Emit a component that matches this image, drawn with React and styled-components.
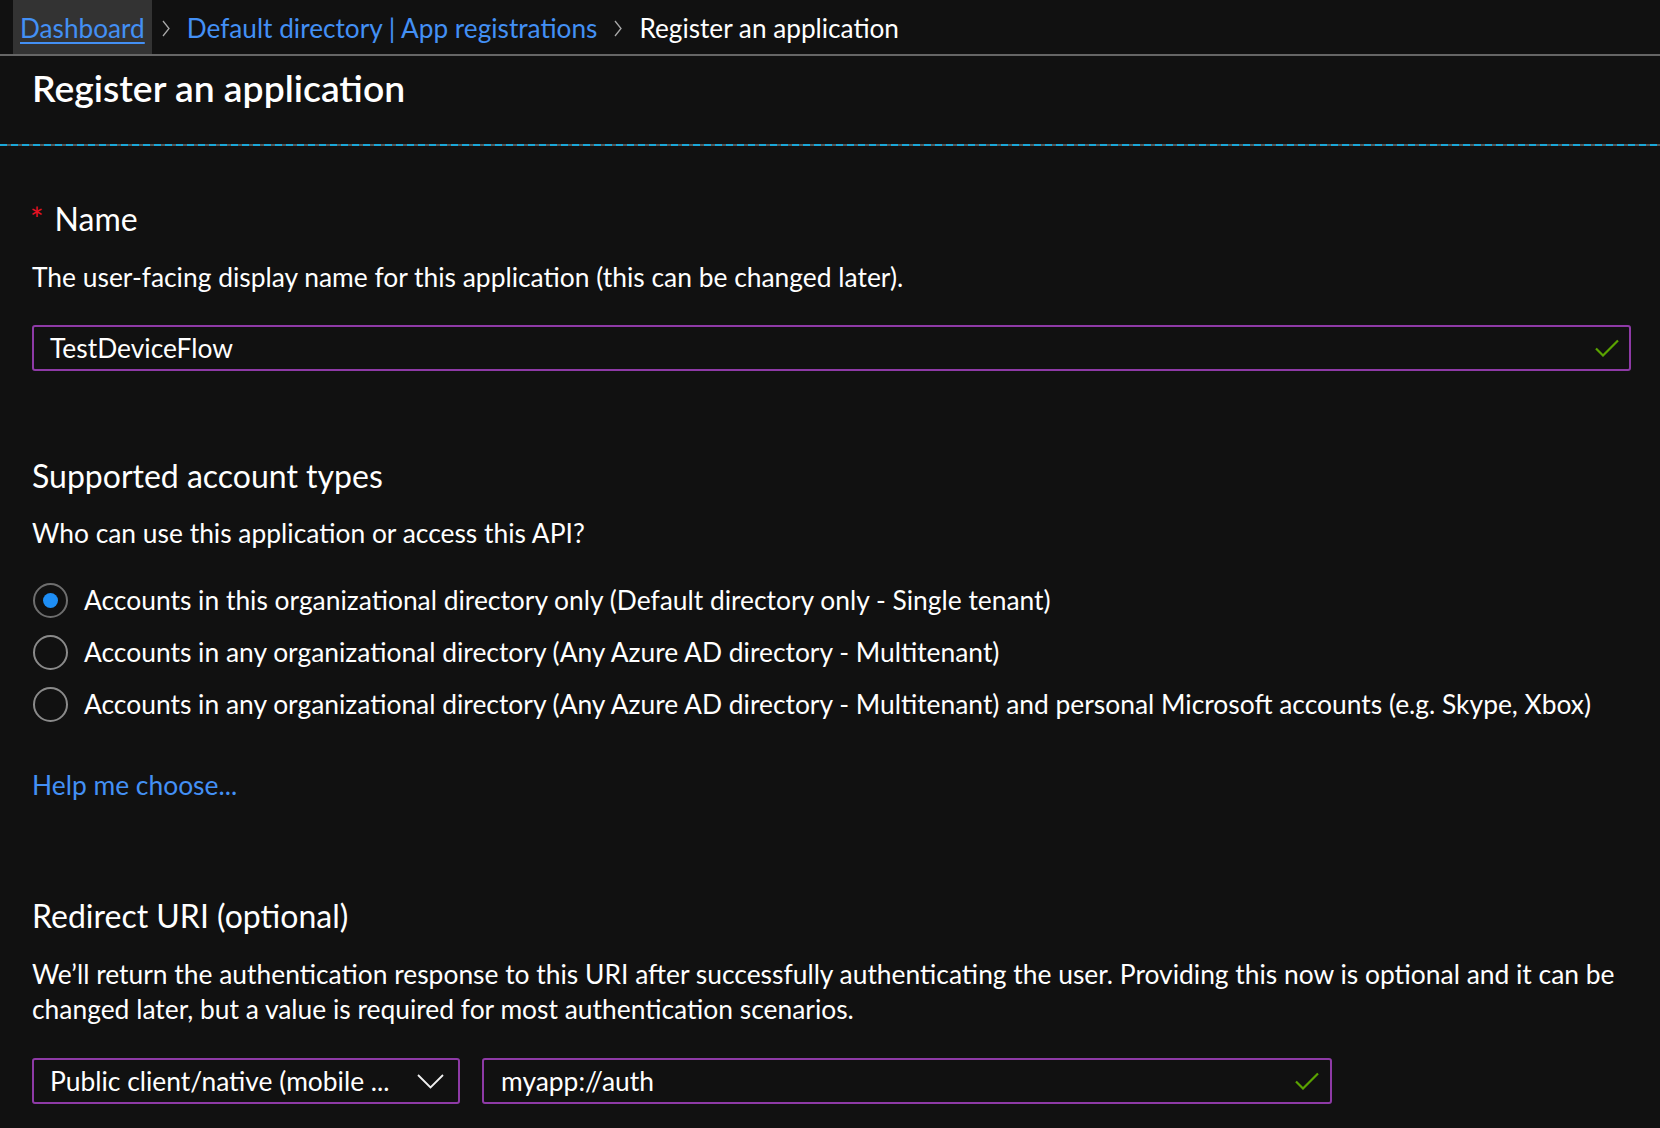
import React from "react";
import styled, { createGlobalStyle } from "styled-components";

const Global = createGlobalStyle`
  html, body { margin: 0; padding: 0; background: #111111; }
  body {
    font-family: "Segoe UI", Lato, "Open Sans", sans-serif;
    color: #ffffff;
  }
  * { box-sizing: border-box; }
`;

const Page = styled.div`
  width: 1660px;
  min-height: 1128px;
  background: #111111;
`;

const Breadcrumb = styled.nav`
  height: 56px;
  border-bottom: 2px solid #666666;
  display: flex;
  align-items: stretch;
  padding-left: 13px;
  font-size: 26.2px;
  line-height: 32px;
`;

const Crumb = styled.a`
  display: flex;
  align-items: center;
  padding: 2px 7px 0;
  color: ${(p) => (p.$current ? "#ffffff" : "#4390f5")};
  text-decoration: ${(p) => (p.$underline ? "underline" : "none")};
  text-underline-offset: 4px;
  text-decoration-thickness: 2px;
  background: ${(p) => (p.$hover ? "#333333" : "transparent")};
`;

const Sep = styled.span`
  display: flex;
  align-items: center;
  padding: 2px 10px 0;
`;

const TitleBar = styled.header`
  padding: 10px 32px 34px;
`;

const Title = styled.h1`
  margin: 0;
  font-size: 37.3px;
  line-height: 44px;
  font-weight: 600;
`;

const Dashed = styled.div`
  height: 2px;
  background: repeating-linear-gradient(
    to right,
    #1aa7d9 0 7px,
    #555555 7px 11px
  );
`;

const Content = styled.main`
  width: 1631px;
  padding-left: 32px;
`;

const Heading = styled.h2`
  margin: ${(p) => p.$mt}px 0 0;
  font-size: 32px;
  line-height: 40px;
  font-weight: 400;
`;

const Required = styled.span`
  color: #e81123;
  margin-right: 11px;
  margin-left: -2px;
`;

const Text = styled.p`
  margin: ${(p) => p.$mt}px 0 0;
  font-size: 26.4px;
  line-height: ${(p) => p.$lh || 32}px;
`;

const Field = styled.div`
  margin-top: ${(p) => p.$mt || 0}px;
  width: ${(p) => p.$w};
  height: 46px;
  border: 2px solid #8e3aa6;
  border-radius: 3px;
  display: flex;
  align-items: center;
  justify-content: space-between;
  padding: 0 ${(p) => p.$pr || 10}px 0 ${(p) => p.$pl || 16}px;
  font-size: 26.4px;
  color: #ffffff;
  flex: none;
`;

const RadioList = styled.div`
  margin-top: 31px;
  display: flex;
  flex-direction: column;
  gap: 12px;
`;

const RadioRow = styled.label`
  height: 40px;
  display: flex;
  align-items: center;
  font-size: 26.4px;
  gap: 16px;
  padding-left: 1px;
`;

const RadioCircle = styled.span`
  width: 35px;
  height: 35px;
  border-radius: 50%;
  border: 2px solid ${(p) => (p.$on ? "#6e6e6e" : "#8a8a8a")};
  display: flex;
  align-items: center;
  justify-content: center;
  flex: none;
  &::after {
    content: "";
    width: 15px;
    height: 15px;
    border-radius: 50%;
    background: ${(p) => (p.$on ? "#1e8ef5" : "transparent")};
  }
`;

const Link = styled.a`
  display: block;
  margin-top: 45px;
  font-size: 26.4px;
  line-height: 32px;
  color: #4390f5;
  text-decoration: none;
`;

const Row = styled.div`
  margin-top: 31px;
  display: flex;
  gap: 22px;
`;

const Check = ({ w = 24 }) => (
  <svg width={w} height="18" viewBox="0 0 24 18" fill="none">
    <path d="M1 9.5 L8 16.5 L23 1.5" stroke="#5aa300" strokeWidth="2.2" />
  </svg>
);

const Chevron = () => (
  <svg width="8" height="17" viewBox="0 0 8 17" fill="none">
    <path d="M1 1 L7 8.5 L1 16" stroke="#a8a8a8" strokeWidth="1.3" />
  </svg>
);

const Caret = () => (
  <svg width="27" height="15" viewBox="0 0 27 15" fill="none">
    <path d="M1 1 L13.5 13.5 L26 1" stroke="#f0f0f0" strokeWidth="1.8" />
  </svg>
);

const options = [
  "Accounts in this organizational directory only (Default directory only - Single tenant)",
  "Accounts in any organizational directory (Any Azure AD directory - Multitenant)",
  "Accounts in any organizational directory (Any Azure AD directory - Multitenant) and personal Microsoft accounts (e.g. Skype, Xbox)",
];

export default function App() {
  return (
    <Page>
      <Global />
      <Breadcrumb>
        <Crumb $hover $underline href="#">Dashboard</Crumb>
        <Sep><Chevron /></Sep>
        <Crumb href="#">Default directory | App registrations</Crumb>
        <Sep><Chevron /></Sep>
        <Crumb $current>Register an application</Crumb>
      </Breadcrumb>
      <TitleBar>
        <Title>Register an application</Title>
      </TitleBar>
      <Dashed />
      <Content>
        <Heading $mt={53}>
          <Required>*</Required>Name
        </Heading>
        <Text $mt={22}>
          The user-facing display name for this application (this can be changed later).
        </Text>
        <Field $mt={32} $w="1599px">
          <span>TestDeviceFlow</span>
          <Check />
        </Field>

        <Heading $mt={85}>Supported account types</Heading>
        <Text $mt={21}>Who can use this application or access this API?</Text>
        <RadioList>
          {options.map((o, i) => (
            <RadioRow key={i}>
              <RadioCircle $on={i === 0} />
              <span>{o}</span>
            </RadioRow>
          ))}
        </RadioList>
        <Link href="#">Help me choose...</Link>

        <Heading $mt={95}>Redirect URI (optional)</Heading>
        <Text $mt={21} $lh={35}>
          We’ll return the authentication response to this URI after successfully authenticating the user. Providing this now is optional and it can be changed later, but a value is required for most authentication scenarios.
        </Text>
        <Row>
          <Field $w="428px" $pr={14}>
            <span>Public client/native (mobile ...</span>
            <Caret />
          </Field>
          <Field $w="850px" $pl={17} $pr={11}>
            <span>myapp://auth</span>
            <Check />
          </Field>
        </Row>
      </Content>
    </Page>
  );
}
